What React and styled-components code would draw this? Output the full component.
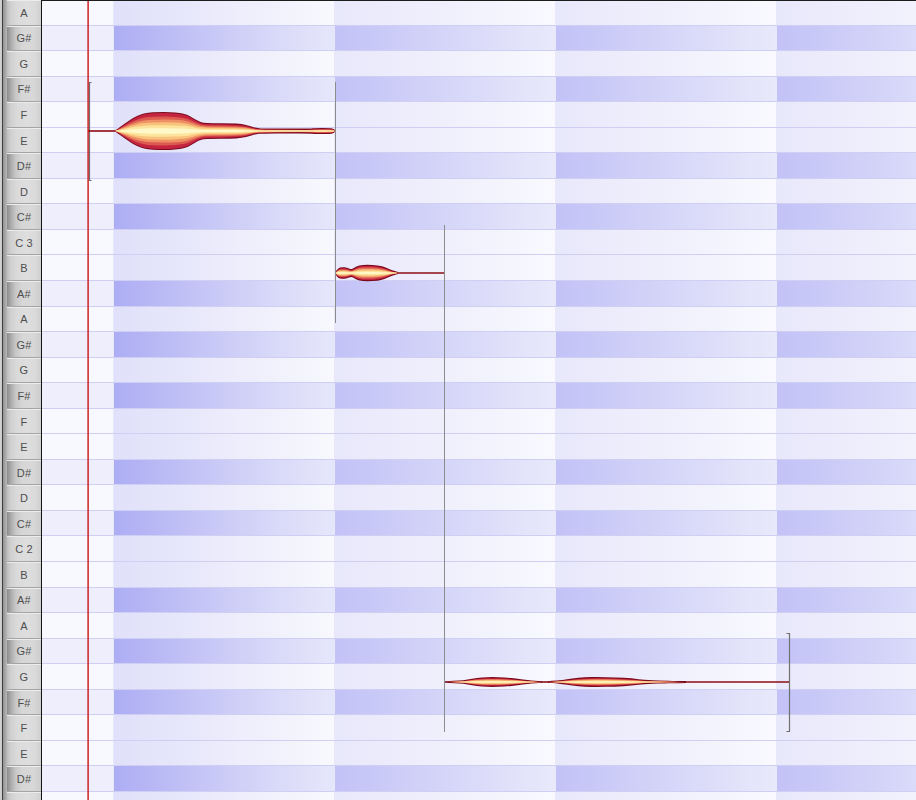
import React from 'react';
import styled, { createGlobalStyle } from 'styled-components';

const ROW_H = 25.55;
const NOTE_NAMES = ['A', 'G#', 'G', 'F#', 'F', 'E', 'D#', 'D', 'C#', 'C', 'B', 'A#'];
const ROW_COUNT = 32;

const rows = Array.from({ length: ROW_COUNT }, (_, i) => {
  const n = NOTE_NAMES[i % 12];
  const label = n === 'C' ? `C ${3 - Math.floor(i / 12)}` : n;
  // the last row is only a sliver at the bottom edge; its label falls outside the view
  return { label: i < 31 ? label : '', sharp: n.includes('#') };
});

const GlobalStyle = createGlobalStyle`
  html, body { margin: 0; padding: 0; background: #ffffff; overflow: hidden; }
  #root { width: 916px; height: 800px; }
`;

const Stage = styled.div`
  position: relative;
  width: 916px;
  height: 800px;
  display: flex;
  overflow: hidden;
  font-family: "Liberation Sans", Arial, sans-serif;
`;

const Keyboard = styled.div`
  flex: none;
  width: 42px;
  height: 800px;
  display: flex;
  box-sizing: border-box;
  border-right: 1px solid #141414;
`;

const Rail = styled.div`
  flex: none;
  width: 7px;
  background: linear-gradient(
    to right,
    #d4d4d4 0px,
    #c6c6c6 2px,
    #404040 2px,
    #404040 3px,
    #929292 3px,
    #b8b8b8 7px
  );
`;

const KeyColumn = styled.div`
  flex: 1;
  display: flex;
  flex-direction: column;
  overflow: hidden;
`;

const Key = styled.div`
  flex: none;
  height: ${ROW_H}px;
  box-sizing: border-box;
  border-top: 1px solid #ececec;
  border-bottom: 1px solid #a4a4a4;
  display: flex;
  align-items: center;
  justify-content: center;
  font-size: 11px;
  color: #4e4e4e;
  letter-spacing: 0.2px;
  background: ${(p) =>
    p.$sharp
      ? 'linear-gradient(to right, #8a8a8a 0%, #acacac 12%, #c8c8c8 26%, #d6d6d6 45%, #d8d8d8 75%, #cdcdcd 100%)'
      : 'linear-gradient(to right, #bdbdbd 0%, #cfcfcf 10%, #dadada 30%, #dedede 60%, #d9d9d9 85%, #cfcfcf 100%)'};
`;

const Grid = styled.div`
  flex: 1;
  height: 800px;
  display: flex;
  flex-direction: column;
  overflow: hidden;
  position: relative;
  &::before {
    content: '';
    position: absolute;
    left: 0;
    right: 0;
    top: 0;
    height: 1px;
    background: #1c1c1c;
    z-index: 1;
  }
`;

const GridRow = styled.div`
  flex: none;
  height: ${ROW_H}px;
  box-sizing: border-box;
  display: grid;
  grid-template-columns: 71px repeat(4, 221px);
  border-bottom: 1px solid #cfcff4;
`;

const LeadCell = styled.div`
  background: ${(p) => (p.$sharp ? '#eeeefc' : '#f8f8ff')};
`;

const BarCell = styled.div`
  border-left: 1px solid #e8e8fb;
  background: ${(p) =>
    p.$sharp
      ? p.$strong
        ? 'linear-gradient(to right, #adadf4 0%, #c2c2f6 35%, #dadaf9 75%, #e6e6fb 100%)'
        : 'linear-gradient(to right, #c2c2f7 0%, #cfcff8 35%, #dfdffa 75%, #e9e9fb 100%)'
      : p.$strong
        ? 'linear-gradient(to right, #e0e0fa 0%, #e9e9fb 40%, #f3f3fd 80%, #f8f8fe 100%)'
        : 'linear-gradient(to right, #e8e8fb 0%, #eeeefc 40%, #f5f5fe 80%, #f9f9ff 100%)'};
`;

const Overlay = styled.svg`
  position: absolute;
  left: 0;
  top: 0;
  width: 916px;
  height: 800px;
  pointer-events: none;
`;

function smoothLine(pts, move = true) {
  let d = `${move ? 'M' : 'L'}${pts[0][0]} ${pts[0][1]}`;
  for (let i = 1; i < pts.length - 1; i++) {
    const [x, y] = pts[i];
    const [nx, ny] = pts[i + 1];
    d += ` Q${x} ${y} ${(x + nx) / 2} ${(y + ny) / 2}`;
  }
  const last = pts[pts.length - 1];
  d += ` L${last[0]} ${last[1]}`;
  return d;
}

function blobPath(profile, cy, f) {
  const top = profile.map(([x, h]) => [x, cy - Math.max(0, f(h))]);
  const bot = profile
    .slice()
    .reverse()
    .map(([x, h]) => [x, cy + Math.max(0, f(h))]);
  return `${smoothLine(top)} ${smoothLine(bot, false)} Z`;
}

const LAYERS = [
  { color: '#7a0a1c', f: (h) => h },
  { color: '#c42440', f: (h) => h - 1.1 },
  { color: '#dc5a50', f: (h) => (h - 1) * 0.8 },
  { color: '#ee9064', f: (h) => (h - 1) * 0.64 },
  { color: '#f8c27c', f: (h) => (h - 1) * 0.48 },
  { color: '#fde49c', f: (h) => (h - 1) * 0.32 },
  { color: '#fff8c8', f: (h) => (h - 1) * 0.15 },
];

const BLOBS = [
  {
    cy: 131,
    profile: [
      [115, 0.5], [118, 2.5], [122, 5.5], [127, 9], [133, 13], [140, 16.5], [148, 18.5],
      [158, 19], [170, 19], [180, 18], [187, 16.5], [193, 13], [198, 10], [203, 8.2],
      [212, 7.8], [230, 7.8], [242, 7], [250, 5], [256, 3.2], [262, 2.5], [290, 2.4],
      [311, 2.4], [314, 3], [330, 3], [333, 2.5], [335, 1],
    ],
  },
  {
    cy: 273,
    profile: [
      [336, 2], [338, 5], [342, 6], [347, 5.5], [351, 3.5], [354, 5], [359, 7.8],
      [367, 8.3], [378, 7.8], [386, 5.5], [391, 3], [395, 1.8], [398, 1],
    ],
  },
  {
    cy: 682,
    profile: [
      [445, 0.8], [455, 1.3], [463, 1.7], [472, 3.4], [482, 4.6], [492, 5], [505, 4.6],
      [518, 3.3], [528, 1.9], [535, 1.3], [542, 0.8],
    ],
  },
  {
    cy: 682,
    profile: [
      [548, 0.8], [556, 1.4], [562, 1.9], [572, 3.6], [585, 4.8], [597, 5], [615, 4.7],
      [632, 3.6], [645, 2.1], [652, 1.7], [665, 1.5], [672, 1.2], [686, 0.9],
    ],
  },
];

const PITCH_LINES = [
  'M88 131 H116',
  'M397 273 H444',
  'M541 682 H549',
  'M685 682 H789',
];

function PitchOverlay() {
  return (
    <Overlay viewBox="0 0 916 800">
      <g stroke="#8c8c8c" strokeWidth="1" fill="none">
        <path d="M335.5 82 V323" />
        <path d="M444.5 225 V732" />
      </g>
      <g stroke="#707070" strokeWidth="1.2" fill="none">
        <path d="M91.5 82.5 H89.5 V180.5 H91.5" />
        <path d="M786.5 633.5 H789.5 V731.5 H786.5" />
      </g>
      <g stroke="#8d0c14" strokeWidth="1.6" fill="none">
        {PITCH_LINES.map((d) => (
          <path key={d} d={d} />
        ))}
      </g>
      {BLOBS.map((b, bi) => (
        <g key={bi}>
          {LAYERS.map((l, li) => (
            <path key={li} d={blobPath(b.profile, b.cy, l.f)} fill={l.color} />
          ))}
        </g>
      ))}
      <rect x="87.4" y="0" width="1.4" height="800" fill="#cc1414" />
    </Overlay>
  );
}

export default function App() {
  return (
    <>
      <GlobalStyle />
      <Stage>
        <Keyboard>
          <Rail />
          <KeyColumn>
            {rows.map((r, i) => (
              <Key key={i} $sharp={r.sharp}>
                {r.label}
              </Key>
            ))}
          </KeyColumn>
        </Keyboard>
        <Grid>
          {rows.map((r, i) => (
            <GridRow key={i}>
              <LeadCell $sharp={r.sharp} />
              {[0, 1, 2, 3].map((c) => (
                <BarCell key={c} $sharp={r.sharp} $strong={c === 0} />
              ))}
            </GridRow>
          ))}
        </Grid>
        <PitchOverlay />
      </Stage>
    </>
  );
}
